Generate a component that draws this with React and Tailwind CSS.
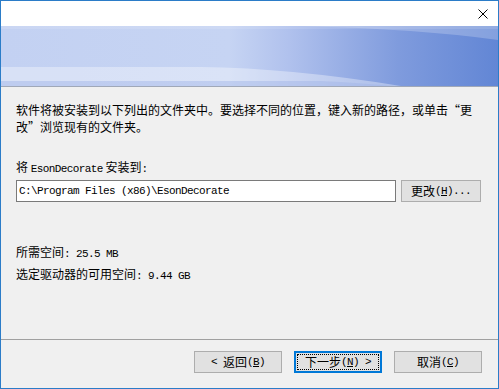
import React from 'react';

const cjk = "font-['Noto_Sans_CJK_SC',sans-serif]";

// half-width latin run, like the SimSun ascii glyphs in the dialog
function M({ children, className = '' }) {
  return (
    <span className={`font-['Liberation_Mono','DejaVu_Sans_Mono',monospace] text-[11px] tracking-[-0.6px] ${className}`}>
      {children}
    </span>
  );
}

function Banner() {
  return (
    <svg width="497" height="60" viewBox="0 0 497 60" className="block">
      <defs>
        <linearGradient id="bg" x1="0" y1="0" x2="1" y2="0">
          <stop offset="0" stopColor="#c3d1f2" />
          <stop offset="0.46" stopColor="#c6d4f3" />
          <stop offset="0.58" stopColor="#b0c1ed" />
          <stop offset="0.8" stopColor="#7f9bdd" />
          <stop offset="1" stopColor="#6286d5" />
        </linearGradient>
      </defs>
      <rect width="497" height="60" fill="url(#bg)" />
      <path d="M300 0 Q420 3 497 14 L497 0 Z" fill="#ffffff" opacity="0.22" />
      <rect x="0" y="0" width="497" height="3" fill="#ffffff" opacity="0.12" />
      <path d="M0 41 L200 41 Q290 42 400 60 L0 60 Z" fill="#ffffff" opacity="0.35" />
      <path d="M0 55 L320 55 Q360 57 390 60 L0 60 Z" fill="#9fb3e6" opacity="0.45" />
    </svg>
  );
}

function Btn({ children, def = false, className = '' }) {
  return (
    <button
      className={`relative h-[22px] bg-[#e1e1e1] text-[12px] text-black flex items-center justify-center ${
        def ? 'border-2 border-[#0078d7]' : 'border border-[#adadad]'
      } ${className}`}
    >
      {def && <span className="absolute inset-[1px] border border-dotted border-black" />}
      {children}
    </button>
  );
}

export default function App() {
  return (
    <div className={`w-[499px] h-[389px] border border-[#2b7cc8] bg-[#f0f0f0] flex flex-col text-black text-[12px] ${cjk}`}>
      {/* title bar */}
      <div className="h-[25px] bg-white flex items-center justify-end pr-[10px]">
        <svg width="10" height="10" viewBox="0 0 10 10">
          <path d="M0.5 0.5 L9.5 9.5 M9.5 0.5 L0.5 9.5" stroke="#000" strokeWidth="1" />
        </svg>
      </div>

      {/* header banner */}
      <div className="border-b border-[#a0a8b8]">
        <Banner />
      </div>

      <div className="flex-1 flex flex-col">
        <div className="pl-[15px] pr-[14px]">
          <p className="mt-[14px] leading-[17px]">
            软件将被安装到以下列出的文件夹中。要选择不同的位置，键入新的路径，或单击“更
            <br />
            改”浏览现有的文件夹。
          </p>

          <p className="mt-[25px] leading-[13px]">
            将 <M>EsonDecorate</M> 安装到<M>:</M>
          </p>

          <div className="mt-[4px] flex items-center gap-[5px]">
            <div className="w-[380px] h-[22px] bg-white border border-[#7a7a7a] flex items-center pl-[2px]">
              <M className="text-black">C:\Program Files (x86)\EsonDecorate</M>
            </div>
            <Btn className="w-[80px] h-[21px]">
              更改<M>(<span className="underline">H</span>)...</M>
            </Btn>
          </div>

          <div className="mt-[40px] leading-[20px]">
            <p>
              所需空间<M>: 25.5 MB</M>
            </p>
            <p>
              选定驱动器的可用空间<M>: 9.44 GB</M>
            </p>
          </div>
        </div>

        <div className="mt-auto border-t border-[#a0a0a0]" />
        <div className="pt-[11px] pb-[15px] pr-[16px] flex justify-end gap-[12px]">
          <Btn className="w-[88px]">
            <M>&lt;&nbsp;</M>返回<M>(<span className="underline">B</span>)</M>
          </Btn>
          <Btn def className="w-[88px]">
            下一步<M>(<span className="underline">N</span>)&nbsp;&gt;</M>
          </Btn>
          <Btn className="w-[88px]">
            取消<M>(<span className="underline">C</span>)</M>
          </Btn>
        </div>
      </div>
    </div>
  );
}
